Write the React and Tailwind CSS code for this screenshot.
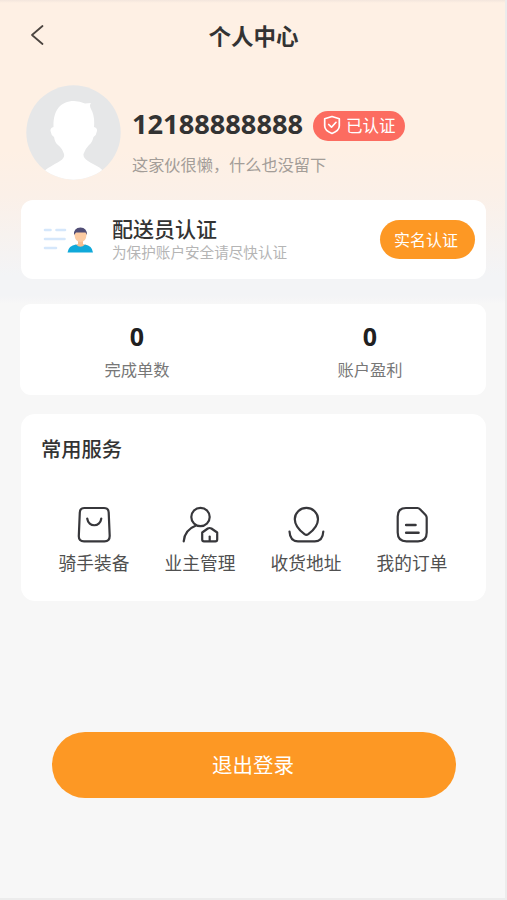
import React from 'react';

const stroke = { fill: 'none', stroke: '#37373b', strokeWidth: 2.2, strokeLinecap: 'round', strokeLinejoin: 'round' };

function BagIcon() {
  return (
    <svg width="40" height="40" viewBox="0 0 40 40" {...stroke}>
      <path d="M10.5 3H30Q34.500 3 34.700 7.500L35.700 31Q35.700 36.300 30.500 36.300H10Q4.700 36.300 4.800 31L5.800 7.500Q6 3 10.500 3Z" />
      <path d="M13.200 13.500C14.500 22.500 26 22.500 27.300 13.500" />
    </svg>
  );
}

function OwnerIcon() {
  return (
    <svg width="40" height="40" viewBox="0 0 40 40" {...stroke}>
      <circle cx="20.500" cy="12" r="9.200" />
      <path d="M16 20.500Q4.500 25 3.700 36.300" />
      <path d="M22.200 27.500L27.800 23.500Q29.600 22.500 31.400 23.500L37.200 27.500V34.500Q37.200 36.300 35.400 36.300H24Q22.200 36.300 22.200 34.500Z" />
      <path d="M29.700 31.500V35.800" />
    </svg>
  );
}

function AddressIcon() {
  return (
    <svg width="40" height="40" viewBox="0 0 40 40" {...stroke}>
      <path d="M18.500 29.200C13 25 8.800 20.500 8.800 14.200A11.600 11.300 0 0 1 32 14.200C32 20.500 27.800 25 22.300 29.200Q20.400 30.500 18.500 29.200Z" />
      <path d="M3.500 26.500Q4 36.300 12 36.300H28.800Q36.800 36.300 37.300 26.500" />
    </svg>
  );
}

function OrderIcon() {
  return (
    <svg width="40" height="40" viewBox="0 0 40 40" {...stroke}>
      <path d="M14 3H25.500Q27 3 28 4.200L33.600 10Q34.700 11.200 34.700 12.800V27.500Q34.700 36.300 26 36.300H14.500Q5.700 36.300 5.700 27.500V11.500Q5.700 3 14 3Z" />
      <path d="M14.200 20H23.500M14.200 27.700H26.500" strokeWidth="2.600" />
    </svg>
  );
}

function Avatar() {
  return (
    <svg width="95" height="95" viewBox="0 0 95 95" className="shrink-0">
      <defs>
        <clipPath id="avatar-clip"><circle cx="47.500" cy="47.500" r="47.200" /></clipPath>
      </defs>
      <g clipPath="url(#avatar-clip)">
        <rect width="95" height="95" fill="#e6e7e8" />
        <path
          fill="#fff"
          d="M17 88C20 83 28 80 34 76Q39 73 38 69Q36 63 32 60Q29 58 28 52Q25 50 24.500 46Q24 43 27.500 42C27 26 34 16 48 16Q54 16 59 18.500L65 18Q63 20 65 24Q69 31 68 42Q71.500 43 71 46Q70.500 50 67.500 52Q66 58 63 60Q59 64 57.500 69Q57 73 62 76C68 80 75 82 79 88V96H17Z"
        />
      </g>
    </svg>
  );
}

function CourierIcon() {
  return (
    <svg width="52" height="32" viewBox="0 0 52 32">
      <g stroke="#d5e7fb" strokeWidth="2.600" strokeLinecap="round">
        <path d="M3 6H8.500M14.500 6H23M3 15H22.500M3 24H14" />
      </g>
      <path d="M36 16H41V20L44 21L38.500 25L33 21L36 20Z" fill="#f5bd91" />
      <path d="M32.500 8H44.500V11Q44 18 38.500 18Q33 18 32.500 11Z" fill="#fccba2" />
      <path d="M32 11Q31.500 3.500 38.500 3.500Q45 3.500 45 11L43.500 8.500H34Z" fill="#504d75" />
      <path d="M25.500 28.500Q26.500 21.500 34 20.500Q38.500 25 43 20.500Q50 21.500 51 28.500Z" fill="#10a9da" />
    </svg>
  );
}

const services = [
  { label: '骑手装备', Icon: BagIcon },
  { label: '业主管理', Icon: OwnerIcon },
  { label: '收货地址', Icon: AddressIcon },
  { label: '我的订单', Icon: OrderIcon },
];

const stats = [
  { value: '0', label: '完成单数' },
  { value: '0', label: '账户盈利' },
];

export default function App() {
  return (
    <div className="h-[900px] w-[507px] overflow-hidden border-r-2 border-b-2 border-[#ececec] bg-[#f7f7f7] bg-[linear-gradient(180deg,#f3e6dd_0px,#fef0e4_3px,#fef0e4_150px,#fbf0e8_195px,#f3f4f6_275px,#f3f4f6_296px,#f7f7f7_304px)] font-['Noto_Sans','Noto_Sans_CJK_SC',sans-serif] text-[#333]">
      <header className="grid h-[72px] grid-cols-[72px_1fr_72px] items-center">
        <svg width="14" height="22" viewBox="0 0 14 22" className="ml-[30px] -mt-0.5" fill="none" stroke="#4b443f" strokeWidth="1.800" strokeLinecap="round" strokeLinejoin="round">
          <path d="M12.500 2L2 11L12.500 20" />
        </svg>
        <h1 className="pt-[3px] pl-[2px] text-center text-[22.500px] leading-none font-bold">个人中心</h1>
      </header>

      <section className="flex h-[128px] pt-[13px] pl-[26px]">
        <Avatar />
        <div className="ml-[11px] pt-[25px]">
          <div className="flex h-[31px] items-center">
            <span className="w-[171px] pb-[3px] text-[27.200px] leading-none font-bold">12188888888</span>
            <span className="ml-[10px] flex h-[30px] w-[92px] items-center rounded-full bg-[#fc6c60] pl-[10px] text-[16.500px] leading-none whitespace-nowrap text-white">
              <svg width="18" height="20" viewBox="0 0 18 20" className="mr-[5px] -mt-0.5 shrink-0" fill="none" stroke="#fff" strokeWidth="1.700" strokeLinecap="round" strokeLinejoin="round">
                <path d="M9 1.500L16.300 3.800V11Q16.300 15.500 9 18.500Q1.700 15.500 1.700 11V3.800Z" />
                <path d="M5.700 9.500L8.500 12.200L13 7.300" />
              </svg>
              <span className="pt-[2px]">已认证</span>
            </span>
          </div>
          <p className="mt-[16px] text-[16.200px] leading-none whitespace-nowrap text-[#a39d98]">这家伙很懒，什么也没留下</p>
        </div>
      </section>

      <section className="ml-[21px] flex h-[79px] w-[465px] items-center rounded-[12px] bg-white pr-[11px] pl-[21px]">
        <CourierIcon />
        <div className="-mt-[2px] ml-[18px] flex-1">
          <h2 className="text-[21px] leading-[26px] font-medium">配送员认证</h2>
          <p className="text-[14.600px] leading-[20px] text-[#b5b5b5]">为保护账户安全请尽快认证</p>
        </div>
        <button className="h-[39px] w-[95px] rounded-full bg-[#fd9824] pr-[3px] text-[16px] leading-none text-white">实名认证</button>
      </section>

      <section className="mt-[25px] ml-[20px] grid h-[91px] w-[466px] grid-cols-2 rounded-[11px] bg-white pt-[18px] text-center">
        {stats.map(({ value, label }) => (
          <div key={label}>
            <div className="pl-[1px] text-[25px] leading-[28px] font-bold text-[#202020]">{value}</div>
            <div className="mt-[12px] pl-[1px] text-[16.300px] leading-none text-[#777]">{label}</div>
          </div>
        ))}
      </section>

      <section className="mt-[19px] ml-[21px] h-[187px] w-[465px] rounded-[14px] bg-white pt-[25px]">
        <h2 className="ml-[20px] text-[20.300px] leading-[21px] font-medium">常用服务</h2>
        <div className="mt-[45px] ml-[20px] grid w-[424px] grid-cols-4">
          {services.map(({ label, Icon }) => (
            <div key={label} className="flex flex-col items-center">
              <Icon />
              <span className="mt-[10px] text-[17.700px] leading-none text-[#505050]">{label}</span>
            </div>
          ))}
        </div>
      </section>

      <button className="mt-[131px] ml-[52px] flex h-[66px] w-[404px] items-center justify-center rounded-full bg-[#fd9824] pt-[1px] pr-[2px] text-[20.500px] leading-none text-white">退出登录</button>
    </div>
  );
}
